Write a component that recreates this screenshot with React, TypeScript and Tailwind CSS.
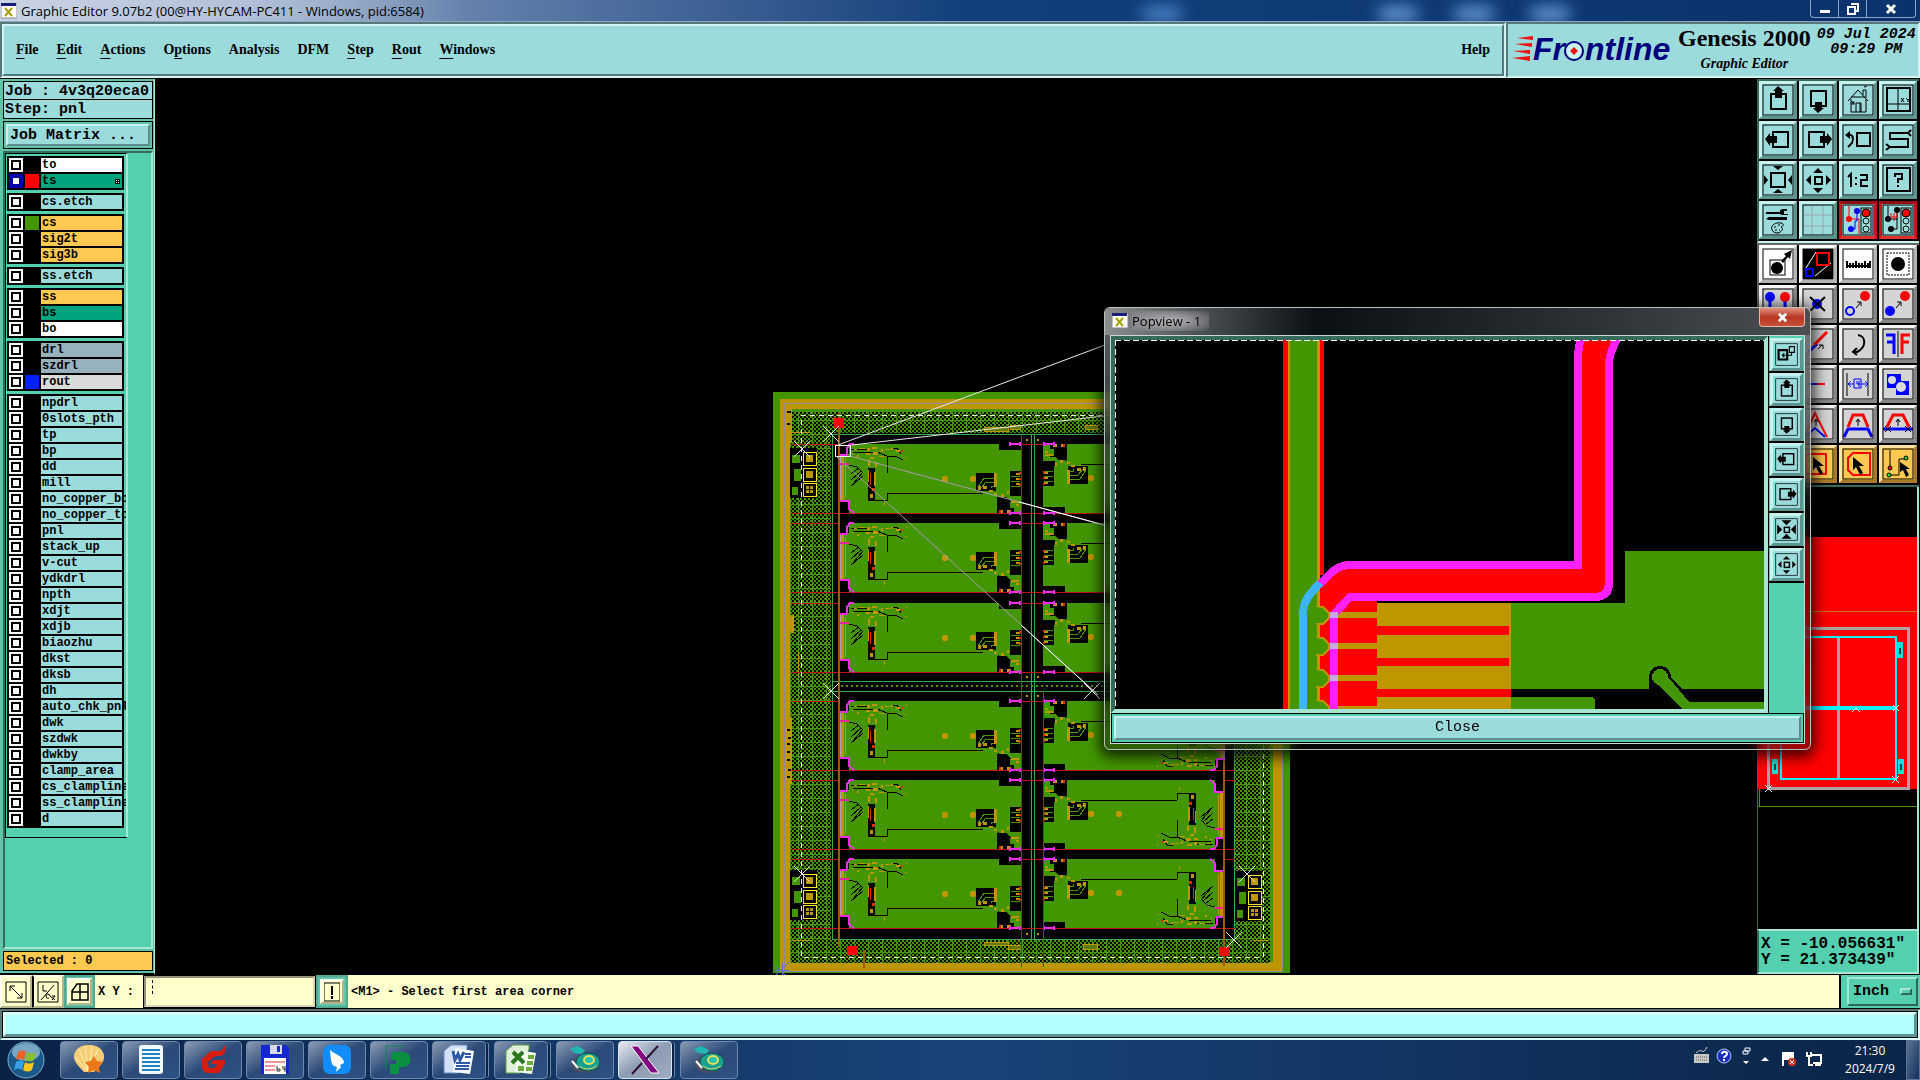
import type { ReactNode } from "react";

type Layer = { name: string; tone: string; swatch?: string; active?: boolean };

const AQUA = "bg-[#9bdbdb]";
const GOLD = "bg-[#ffc850]";
const GREEN = "bg-[#00a57d]";
const STEEL = "bg-[#98b2bd]";

const plain = (names: string): Layer[] =>
  names.split(" ").map((name) => ({ name, tone: AQUA }));

const layerGroups: Layer[][] = [
  [
    { name: "to", tone: "bg-white" },
    { name: "ts", tone: GREEN, swatch: "bg-[#ff0000]", active: true },
  ],
  plain("cs.etch"),
  [
    { name: "cs", tone: GOLD, swatch: "bg-[#439600]" },
    { name: "sig2t", tone: GOLD },
    { name: "sig3b", tone: GOLD },
  ],
  plain("ss.etch"),
  [
    { name: "ss", tone: GOLD },
    { name: "bs", tone: GREEN },
    { name: "bo", tone: "bg-white" },
  ],
  [
    { name: "drl", tone: STEEL },
    { name: "szdrl", tone: STEEL },
    { name: "rout", tone: "bg-[#dadada]", swatch: "bg-[#0020ff]" },
  ],
  plain(
    "npdrl 0slots_pth tp bp dd mill no_copper_bo no_copper_to pnl stack_up v-cut ydkdrl npth xdjt xdjb biaozhu dkst dksb dh auto_chk_pnl dwk szdwk dwkby clamp_area cs_clampline ss_clampline d"
  ),
];

const menus: [string, number][] = [
  ["File", 0],
  ["Edit", 0],
  ["Actions", 0],
  ["Options", 1],
  ["Analysis", -1],
  ["DFM", -1],
  ["Step", 0],
  ["Rout", 0],
  ["Windows", 0],
];

/* ---------- toolbar glyphs, all on a 30x30 grid ---------- */

const box = (x: number, y: number, s: number, w = 2) => (
  <rect x={x} y={y} width={s} height={s} fill="none" stroke="#000" strokeWidth={w} />
);

const lights = (
  <>
    <rect x="18" y="3" width="10" height="25" fill="#9bdbdb" stroke="#000" />
    <circle cx="23" cy="8" r="4" fill="#f00" stroke="#000" />
    <circle cx="23" cy="16" r="3" fill="none" stroke="#000" />
    <circle cx="23" cy="24" r="3" fill="none" stroke="#000" />
  </>
);

const cursor = <path d="M10 8v13l3-3 4 8 3-2-4-7h5z" fill="#000" />;

const glyphs: Record<string, ReactNode> = {
  up: (
    <>
      {box(8, 9, 15)}
      <path d="M15 1l6 5h-2v7h-7V6H10z" />
    </>
  ),
  down: (
    <>
      {box(8, 6, 15)}
      <path d="M15 28l6-5h-2v-6h-7v6h-2z" />
    </>
  ),
  left: (
    <>
      {box(10, 7, 15)}
      <path d="M2 14l5-6v3h7v7H7v3z" />
    </>
  ),
  right: (
    <>
      {box(6, 7, 15)}
      <path d="M29 14l-5-6v3h-7v7h7v3z" />
    </>
  ),
  home: (
    <g fill="none" stroke="#000">
      <path d="M5 16L15 5l10 11M8 14v13h15V14M20 10V5h3v8M13 27v-9h5v9M17 18v9M8 12h14M21 2l3-1" />
      <rect x="9" y="17" width="2" height="2" />
    </g>
  ),
  xy: (
    <>
      {box(4, 3, 23)}
      <path d="M15 3v23M4 19h23" stroke="#000" fill="none" />
      <path d="M18 13l3 4M21 13l-3 4M23 13l2 2 2-2M25 15v2" stroke="#000" fill="none" />
    </>
  ),
  back: (
    <>
      {box(14, 8, 13)}
      <path d="M5 10c5-1 6 3 4 8l-4 4" fill="none" stroke="#000" strokeWidth="2" />
      <path d="M2 10l5-4v8z" />
    </>
  ),
  snake: (
    <path d="M25 8H7v6h18v8H7M25 8l3-3M25 8l3 3M7 22l-4-3M7 22l-4 3" fill="none" stroke="#000" strokeWidth="2" />
  ),
  zoomOut: (
    <>
      {box(8, 8, 14)}
      <path d="M10 1h10l-5 4zM10 28h10l-5-4zM1 10v10l4-5zM29 10v10l-4-5z" />
    </>
  ),
  zoomIn: (
    <>
      {box(12, 12, 7)}
      <path d="M10 8h10l-5-5zM10 23h10l-5 5zM8 10v10l-5-5zM23 10v10l5-5z" />
    </>
  ),
  shrink: (
    <>
      {box(12, 12, 7)}
      <path d="M8 2h14l-7 7zM8 28h14l-7-7zM2 8v14l7-7zM28 8v14l-7-7z" />
    </>
  ),
  ratio: (
    <path d="M5 12l3-3v13M13 12v2M13 18v2M17 10h7v5h-6v6h7" fill="none" stroke="#000" strokeWidth="2" />
  ),
  help: (
    <>
      {box(4, 3, 23)}
      <path d="M12 12V9h7v5h-4v4M15 20v2" fill="none" stroke="#000" strokeWidth="2" />
    </>
  ),
  tools: (
    <>
      <path d="M3 7h14v-2l3-1h4v2h-3v3h4v1h-6l-2-1H3zM3 14l3-2h18v3H6z" />
      <path d="M9 25c-2-5 4-8 9-7 4 1 2 3 0 4 3 1 1 5-3 6-3 0-5-1-6-3z" fill="none" stroke="#000" />
      <path d="M11 22h2M15 20h2M12 25h2M16 25h1" stroke="#000" />
    </>
  ),
  grid: <path d="M9 0v30M20 0v30M0 10h30M0 21h30" stroke="#9aa8a8" fill="none" />,
  routeOn: (
    <>
      <path d="M6 1v13h10v15" stroke="#f00" fill="none" />
      <path d="M14 6v10h-2v8H8" stroke="#00f" fill="none" />
      <circle cx="6" cy="14" r="3" fill="#f00" />
      <circle cx="14" cy="6" r="3" fill="#00f" />
      <circle cx="8" cy="24" r="3" fill="#00f" />
      {lights}
    </>
  ),
  routeErr: (
    <>
      <path d="M5 1v13h10M14 4v20H8" stroke="#000" fill="none" />
      <path d="M8 8v4h7M11 8v8M14 8v4" stroke="#f00" fill="none" />
      <circle cx="5" cy="14" r="3" />
      <circle cx="14" cy="5" r="3" />
      <circle cx="8" cy="24" r="3" />
      {lights}
    </>
  ),
  pick: (
    <>
      {box(7, 11, 15, 1)}
      <circle cx="14" cy="19" r="6" />
      <path d="M18 12l5-5-2-2 8-4-2 9-2-2-5 6z" />
    </>
  ),
  popview: (
    <>
      <rect width="30" height="30" />
      <path d="M3 19L13 3M12 27l16-13" stroke="#fff" />
      <rect x="3" y="20" width="7" height="7" fill="none" stroke="#00f" strokeWidth="2" />
      <rect x="14" y="4" width="12" height="12" fill="none" stroke="#f00" strokeWidth="2" />
    </>
  ),
  ruler: (
    <path d="M3 17h25M4 12v7M7 14v5M10 14v5M13 12v7M16 14v5M19 14v5M22 12v7M25 14v5M27 12v7" stroke="#000" strokeWidth="2" />
  ),
  area: (
    <>
      <rect x="4" y="4" width="22" height="22" fill="none" stroke="#000" strokeDasharray="2 1" />
      <circle cx="15" cy="15" r="7" />
    </>
  ),
  pins: (
    <>
      <path d="M7 8v20M22 8v20" stroke="#00f" strokeWidth="3" />
      <circle cx="7" cy="8" r="5" fill="#00f" />
      <circle cx="22" cy="8" r="5" fill="#f00" />
    </>
  ),
  erase: (
    <>
      <circle cx="14" cy="15" r="5" fill="#00f" />
      <path d="M7 8l15 14M22 8L7 22" stroke="#000" strokeWidth="2" />
    </>
  ),
  copyTo: (
    <>
      <circle cx="7" cy="22" r="4" fill="none" stroke="#00f" strokeWidth="2" />
      <circle cx="22" cy="7" r="5" fill="#f00" />
      <path d="M13 19l5-6M14 13h4v4" stroke="#000" fill="none" />
    </>
  ),
  moveTo: (
    <>
      <circle cx="7" cy="22" r="5" fill="#00f" />
      <circle cx="22" cy="7" r="5" fill="#f00" />
      <path d="M13 19l5-6M14 13h4v4" stroke="#000" fill="none" />
    </>
  ),
  stretch: (
    <>
      <path d="M2 26l12-11" stroke="#00f" strokeWidth="3" />
      <path d="M11 16L24 3" stroke="#f00" strokeWidth="3" />
      <path d="M15 20l4-4M16 16h4v4" stroke="#000" fill="none" />
    </>
  ),
  rotate: (
    <path d="M15 6c8 1 9 12-1 17h-4M14 19l-4 4 4 3" stroke="#000" fill="none" strokeWidth="2" />
  ),
  mirror: (
    <>
      <path d="M3 6h8v19M4 13h7" stroke="#00f" strokeWidth="3" fill="none" />
      <path d="M27 6h-8v19M26 13h-7" stroke="#f00" strokeWidth="3" fill="none" />
      <path d="M15 2v26" stroke="#000" />
    </>
  ),
  segment: (
    <>
      <path d="M2 15h12" stroke="#00f" strokeWidth="2" />
      <path d="M14 15h8" stroke="#f00" strokeWidth="2" />
    </>
  ),
  space: (
    <>
      <path d="M4 4v23M25 4v23" stroke="#000" />
      <path d="M5 15h6M18 15h7M8 12l-3 3 3 3M22 12l3 3-3 3M11 10h7v9h-7zM14 12v3h3M16 12v6" stroke="#00f" fill="none" />
    </>
  ),
  overlap: (
    <>
      <path d="M4 5h14v7h8v14H13v-7H4z" fill="#00f" />
      <circle cx="9" cy="11" r="4" fill="#dadada" />
      <circle cx="18" cy="18" r="5" fill="#dadada" />
    </>
  ),
  peak: (
    <>
      <path d="M1 28L12 4l12 24" stroke="#f00" strokeWidth="2" fill="none" />
      <path d="M2 28l10-9 10 9" stroke="#00f" strokeWidth="2" fill="none" />
      <path d="M13 17v-6M11 13l2-3 2 3" stroke="#000" fill="none" />
    </>
  ),
  trapezoid: (
    <>
      <path d="M1 28l4-8h20l4 8" stroke="#00f" strokeWidth="3" fill="none" />
      <path d="M5 18l5-12h10l5 12" stroke="#f00" strokeWidth="3" fill="none" />
      <path d="M15 17v-6M13 13l2-3 2 3" stroke="#000" fill="none" />
    </>
  ),
  trapezoidCut: (
    <>
      <path d="M0 20h30" stroke="#00f" strokeWidth="3" fill="none" />
      <path d="M4 18l6-12h10l6 12" stroke="#f00" strokeWidth="3" fill="none" />
      <path d="M15 17v-6M13 13l2-3 2 3M2 17l6 6M8 17l-6 6M22 17l6 6M28 17l-6 6" stroke="#000" fill="none" />
    </>
  ),
  selRect: (
    <>
      <rect x="3" y="5" width="20" height="20" fill="none" stroke="#f00" strokeWidth="2" />
      {cursor}
    </>
  ),
  selPoly: (
    <>
      <path d="M10 4h17v22H10l-5-5V9z" fill="none" stroke="#f00" strokeWidth="2" />
      {cursor}
    </>
  ),
  selNet: (
    <>
      <path d="M7 1v17M7 26h9V10h6" fill="none" stroke="#000" />
      <circle cx="7" cy="19" r="2" fill="#f00" stroke="#000" />
      <circle cx="6" cy="26" r="2" fill="#3d3" stroke="#000" />
      <circle cx="23" cy="9" r="2" fill="#3d3" stroke="#000" />
      <path d="M17 13v10l3-2 3 7 3-2-3-6h4z" />
    </>
  ),
  popOut: (
    <g fill="none" stroke="#000">
      <path d="M4 9h12v13H4z" strokeWidth="3" />
      <path d="M19 4h7v8h-7zM22 12v4H9M12 13l-3 3 3 3" strokeWidth="1.5" />
    </g>
  ),
};

const viewTools = [
  "up", "down", "home", "xy",
  "left", "right", "back", "snake",
  "zoomOut", "zoomIn", "ratio", "help",
  "tools", "grid", "routeOn", "routeErr",
];

const editTools = [
  "pick", "popview", "ruler", "area",
  "pins", "erase", "copyTo", "moveTo",
  "stretch", "stretch", "rotate", "mirror",
  "segment", "segment", "space", "overlap",
  "peak", "peak", "trapezoid", "trapezoidCut",
  "selRect", "selRect", "selPoly", "selNet",
];

const popTools = ["popOut", "up", "down", "left", "right", "shrink", "zoomIn"];

function Glyph({ name, className = "size-8" }: { name: string; className?: string }) {
  return (
    <svg viewBox="-1 -1 32 32" className={className}>
      {glyphs[name]}
      <rect x="0" y="0" width="30" height="30" fill="none" stroke="#000" />
    </svg>
  );
}

function toolTone(name: string, i: number, edit: boolean) {
  if (name.startsWith("route")) return `${AQUA} border-[#c4161c] border-t-[#8f1014] border-b-[#e03030]`;
  if (!edit) return `${AQUA} border-t-[#c6f2f0] border-l-[#c6f2f0] border-r-[#5c9490] border-b-[#5c9490]`;
  if (i < 4) return "bg-white border-t-white border-l-white border-r-[#b4b4b4] border-b-[#b4b4b4]";
  if (i > 19) return `${GOLD} border-t-[#ffe6a8] border-l-[#ffe6a8] border-r-[#a87c28] border-b-[#a87c28]`;
  return "bg-[#d4d4d4] border-t-[#f4f4f4] border-l-[#f4f4f4] border-r-[#868686] border-b-[#868686]";
}

function ToolGrid({ tools, edit = false }: { tools: string[]; edit?: boolean }) {
  return (
    <div className="grid grid-cols-[repeat(4,38px)] gap-[2px] bg-black">
      {tools.map((name, i) => (
        <button
          key={i}
          aria-label={name}
          className={`flex h-[38px] items-center justify-center border-3 ${toolTone(name, i, edit)}`}
        >
          <Glyph name={name} />
        </button>
      ))}
    </div>
  );
}

/* ---------- window chrome ---------- */

function XMark() {
  return (
    <svg viewBox="0 0 16 16" className="size-4 shrink-0">
      <rect x="0" y="0" width="16" height="15" fill="#fff" stroke="#888" />
      <rect x="0" y="0" width="15" height="3" fill="#1b1b7a" />
      <path d="M4 5l7 8M11 5l-7 8" stroke="#a6a000" strokeWidth="2" />
    </svg>
  );
}

function TitleBar() {
  return (
    <header className="flex h-[22px] items-start overflow-hidden border-b border-[#8fa5c0] bg-linear-to-r from-[#b4c2d8] via-[#12407c] to-[#0a326c]">
      <div className="flex h-[21px] items-center gap-1 bg-linear-to-r from-[#c8d2e4] via-[#b4c2da] to-[#b4c2da]/0 pr-10 pl-[1px]">
        <XMark />
        <h1 className="font-['Open_Sans',sans-serif] text-[13px] leading-5 whitespace-nowrap text-black">
          Graphic Editor 9.07b2 (00@HY-HYCAM-PC411 - Windows, pid:6584)
        </h1>
      </div>
      {/* blurred desktop icons showing through the glass */}
      <div className="flex flex-1 items-center justify-end gap-9 pt-2 pr-60">
        <span className="mr-40 h-3 w-10 rounded-full bg-[#5c94dc] blur-sm" />
        <span className="h-3 w-10 rounded-full bg-[#7cb0f0] blur-sm" />
        <span className="h-3 w-10 rounded-full bg-[#7cb0f0] blur-sm" />
        <span className="h-3 w-10 rounded-full bg-[#7cb0f0] blur-sm" />
      </div>
      <div className="mr-1 flex h-[18px] divide-x divide-[#8fa5c0] rounded-b border border-t-0 border-[#8fa5c0]">
        <button aria-label="Minimize" className="flex w-7 items-center justify-center">
          <svg viewBox="0 0 12 12" className="size-3"><path d="M1 7h10v3H1z" fill="#fff" /></svg>
        </button>
        <button aria-label="Restore" className="flex w-7 items-center justify-center">
          <svg viewBox="0 0 12 12" className="size-3">
            <path d="M4 1h7v7H9M1 4h7v7H1z" fill="none" stroke="#fff" strokeWidth="2" />
          </svg>
        </button>
        <button aria-label="Close window" className="flex w-12 items-center justify-center">
          <svg viewBox="0 0 12 12" className="size-3">
            <path d="M2 2l8 8M10 2l-8 8" stroke="#fff" strokeWidth="3" />
          </svg>
        </button>
      </div>
    </header>
  );
}

function Logo() {
  return (
    <svg viewBox="0 -8 162 46" className="h-[46px] w-[162px] shrink-0 overflow-visible">
      <path d="M5 3l16-2v4zM3 9l17-1v4zM1 16l17-1v4zM0 23l18-2v5z" fill="#f01010" />
      <g fill="#00007c" fontFamily="Liberation Sans, sans-serif" fontWeight="bold" fontStyle="italic" fontSize="32">
        <text x="21" y="25">Fr</text>
        <text x="73" y="25">ntline</text>
      </g>
      <circle cx="62" cy="16" r="9" fill="#c8f4f4" stroke="#00007c" strokeWidth="2" />
      <path d="M62 12l4 4-4 4-4-4z" fill="#f01010" />
    </svg>
  );
}

function MenuBar() {
  return (
    <div className="flex h-[57px] border-b border-black">
      <nav className={`flex flex-1 items-center justify-between border-2 border-t-[#55787a] border-l-[#55787a] border-r-[#d2f4f4] border-b-[#d2f4f4] ${AQUA}`}>
        <div className="flex h-full flex-1 items-center border-2 border-t-[#d2f4f4] border-l-[#d2f4f4] border-r-[#55787a] border-b-[#55787a] px-3 font-['Liberation_Serif',serif] text-sm font-bold">
          <div className="flex flex-1 gap-[18px]">
            {menus.map(([label, key]) => (
              <button key={label}>
                {key < 0 ? label : (
                  <>
                    {label.slice(0, key)}
                    <span className="underline underline-offset-4">{label[key]}</span>
                    {label.slice(key + 1)}
                  </>
                )}
              </button>
            ))}
          </div>
          <button>Help</button>
        </div>
      </nav>
      <div className={`flex w-[414px] gap-1 border-2 border-t-[#55787a] border-l-[#55787a] border-r-[#d2f4f4] border-b-[#d2f4f4] pl-1 ${AQUA}`}>
        <div className="flex items-center"><Logo /></div>
        <div className="flex flex-col items-center font-['Liberation_Serif',serif] font-bold whitespace-nowrap">
          <span className="text-2xl leading-7">Genesis 2000</span>
          <span className="text-sm leading-6 italic">Graphic Editor</span>
        </div>
        <div className="flex flex-1 flex-col items-center pt-[3px] font-['Liberation_Mono',monospace] text-[15px] leading-[15px] font-bold whitespace-nowrap italic">
          <span>09 Jul 2024</span>
          <span>09:29 PM</span>
        </div>
      </div>
    </div>
  );
}

/* ---------- left column ---------- */

function LayerRow({ layer }: { layer: Layer }) {
  const id = `layer-${layer.name}`;
  return (
    <li className="flex h-[14px] gap-[2px]">
      <input
        id={id}
        type="checkbox"
        className={`size-[14px] shrink-0 appearance-none border-2 bg-white outline-2 -outline-offset-4 ${
          layer.active ? "border-[#0000b4] outline-[#0000a0]" : "border-white outline-black"
        }`}
      />
      <span className={`w-[14px] shrink-0 ${layer.swatch ?? "bg-black"}`} />
      <label
        htmlFor={id}
        className={`flex w-[81px] items-center justify-between pl-[1px] text-xs leading-[14px] font-bold whitespace-nowrap ${layer.tone}`}
      >
        {layer.name}
        {layer.active && (
          <svg viewBox="0 0 5 5" className="mr-[2px] size-[5px]">
            <path d="M0 0h5v5H0z" />
            <path d="M1 1h1v1H1zM3 1h1v1H3zM1 3h1v1H1zM3 3h1v1H3z" fill="#fff" />
          </svg>
        )}
      </label>
    </li>
  );
}

function JobPanel() {
  return (
    <aside className="flex w-[155px] shrink-0 flex-col gap-[2px] border-r border-b-2 border-r-[#a6e6d4] border-b-black bg-[#60c4a8] p-[2px] pr-[1px] pl-[3px] font-['Liberation_Mono',monospace] text-black">
      <div className={`divide-y divide-black border border-black text-[15px] font-bold ${AQUA}`}>
        <p className="h-[18px] pl-[1px] leading-5 whitespace-nowrap">Job : 4v3q20eca0</p>
        <p className="h-[18px] pl-[1px] leading-5">Step: pnl</p>
      </div>
      <div className="border border-black p-[2px]">
        <button className={`block h-[22px] w-full border-2 border-t-[#c6f2f0] border-l-[#c6f2f0] border-r-[#5c8c8c] border-b-[#5c8c8c] pl-[2px] text-left text-[15px] leading-5 font-bold ${AQUA}`}>
          Job Matrix ...
        </button>
      </div>
      <div className="flex-1 border-2 border-t-[#35695a] border-l-[#35695a] border-r-[#a6e6d4] border-b-[#a6e6d4] bg-[#54cfb0]">
        <ul className="flex w-[123px] flex-col gap-[3px] overflow-hidden border border-black border-r-2 border-r-[#a6e6d4] p-[1px] pt-[2px] pb-[9px]">
          {layerGroups.map((group, i) => (
            <li key={i} className="w-[117px] bg-black p-[2px]">
              <ul className="flex flex-col gap-[2px]">
                {group.map((layer) => <LayerRow key={layer.name} layer={layer} />)}
              </ul>
            </li>
          ))}
        </ul>
      </div>
      <p className={`h-5 border border-black pl-[2px] text-xs leading-[18px] font-bold ${GOLD}`}>Selected : 0</p>
    </aside>
  );
}

/* ---------- board drawing ---------- */

const unitRows = [444, 523, 603, 701, 780, 859];

// orange pads scattered over one unit: x, y, w, h
const pads = [
  [15, 5, 3, 1], [20, 4, 6, 1], [28, 4, 3, 3], [33, 3, 5, 2], [27, 9, 4, 2], [34, 8, 5, 3], [42, 5, 2, 3],
  [46, 5, 5, 1], [52, 4, 2, 2], [57, 6, 4, 2], [67, 3, 1, 2], [66, 13, 2, 1], [18, 11, 2, 2], [13, 9, 2, 1],
  [40, 12, 6, 1], [29, 16, 2, 6], [31, 13, 4, 2], [36, 18, 2, 5], [29, 26, 1, 12], [35, 28, 2, 14],
  [31, 50, 3, 4], [45, 58, 1, 4], [6, 14, 1, 40], [155, 29, 3, 14], [139, 42, 3, 4], [144, 42, 4, 3],
  [150, 46, 4, 2], [155, 49, 3, 2], [162, 50, 3, 3], [168, 47, 2, 3], [172, 57, 8, 2], [177, 60, 3, 2],
  [160, 66, 4, 3], [168, 66, 4, 3], [177, 29, 4, 2], [177, 34, 4, 2], [177, 39, 4, 2],
];

function Unit() {
  return (
    <>
      <rect width="182" height="69" fill="#439600" />
      <path d="M0 0h10v10H0zM0 57h10v12H0zM160 0h22v6h-22zM137 29h20v18h-20zM171 27h11v25h-11zM158 53h9l4 4v7h4v5h-17zM29 24h7v32h-7z" fill="#000" />
      <rect y="11" width="2" height="47" fill="#b09ac8" />
      <rect x="2" y="11" width="3" height="47" fill="#be9600" />
      <path
        d="M48 12v17M48 49v7H29M48 49h96M12 5h16M14 8h22M38 8l10 4h8l8 4M52 4h6l4 6M12 42l12-10M14 40l10-12M12 36l10-9M12 30l8-6M10 21l8 2 6 6M159 52l6 5h10M171 52v-4h10"
        fill="none" stroke="#000" strokeWidth="1"
      />
      {pads.map(([x, y, w, h]) => (
        <rect key={`${x}-${y}`} x={x} y={y} width={w} height={h} fill="#be9600" />
      ))}
      <path d="M139 43l6-9h10M142 44l5-6h8M152 44v-2h3M172 32h9M172 37h9M172 42h9" stroke="#439600" fill="none" />
      <circle cx="106" cy="35" r="3" fill="#be9600" />
      <circle cx="134" cy="35" r="3" fill="#be9600" />
      <path d="M62 6h2v2h-2zM31 29h1v12h-1zM33 44h3v3h-3zM180 28h2v2h-2zM180 34h2v2h-2zM180 40h2v2h-2zM160 66h2v3h-2z" fill="#e02a00" />
      <path d="M0 20h10" stroke="#ff20a0" strokeWidth="2" />
      <path
        d="M15 0h-4l-3 4v7H0M0 57h10v8l5 4M170 0h12M170 69h12M171-2v4M181-2v4M171 67v4M181 67v4"
        fill="none" stroke="#f02cf0" strokeWidth="2"
      />
    </>
  );
}

function Fiducials({ x, y }: { x: number; y: number }) {
  return (
    <g transform={`translate(${x} ${y})`}>
      <rect x="-12" y="-3" width="27" height="50" fill="#000" />
      <path d="M-10 4h8v8h-8zM-8 18h7v12h-7zM-10 36h6v8h-6z" fill="#439600" />
      {[0, 16, 31].map((dy) => (
        <g key={dy}>
          <rect x="1" y={dy + 1} width="13" height="13" fill="#000" stroke="#ffe428" />
          <rect x="4" y={dy + 4} width="7" height="7" fill="#be9600" />
        </g>
      ))}
      <path d="M7 34v8M4 38h7" stroke="#000" />
    </g>
  );
}

function Board() {
  const marks = [[831, 434], [802, 449], [831, 691], [1092, 691], [802, 874], [1247, 874], [1234, 940]];
  return (
    <svg viewBox="155 79 1602 896" className="min-w-0 flex-1 bg-black" shapeRendering="crispEdges" role="img" aria-label="Panel view">
      <defs>
        <pattern id="mesh" width="4" height="4" patternUnits="userSpaceOnUse">
          <rect width="4" height="4" fill="#439600" />
          <path d="M0 0h2v2H0zM2 2h2v2H2z" fill="#000" />
        </pattern>
        <pattern id="bars" width="14" height="14" patternUnits="userSpaceOnUse">
          <path d="M0 0h14M0 0v14" stroke="#439600" strokeWidth="2" />
        </pattern>
      </defs>
      <rect x="773" y="392" width="517" height="581" fill="#439600" />
      <rect x="785" y="404" width="493" height="563" fill="none" stroke="#be9600" strokeWidth="10" />
      <rect x="784" y="403" width="498" height="568" fill="none" stroke="#8a8a9c" />
      <rect x="791" y="412" width="479" height="551" fill="url(#mesh)" />
      <rect x="791" y="412" width="479" height="551" fill="url(#bars)" />
      <rect x="831" y="433" width="404" height="507" fill="#000" />
      <rect x="832" y="434" width="402" height="505" fill="none" stroke="#34b048" />
      <path d="M1031 434v505M1034 434v505M832 681h402M832 691h402" stroke="#34b048" />
      <path d="M841 686h386" stroke="#439600" strokeWidth="2" strokeDasharray="2 3" />

      <path d="M787 409h5v34h-5zM787 617h4v-2h3v18h-3zM786 718h6v66h-6z" fill="#be9600" />
      <path d="M787 730h3M788 738h3M787 744h3M787 752h3M787 760h3M788 770h3M787 777h3M787 412h4M787 424h3" stroke="#000" strokeWidth="2" />
      <path d="M792 432h18M798 651v26M792 940h18M1253 940h16" stroke="#be9600" />
      <path d="M984 427h24v4h-24zM1010 425h10v4h-10zM1085 425h12v4h-12zM984 942h24v3h-24zM1008 945h13v4h-13zM1083 944h14v5h-14z" fill="#5c7c10" stroke="#be9600" />

      {unitRows.map((y) => (
        <g key={y}>
          <path d={`M791 ${y}h444M791 ${y + 69}h444`} stroke="#c01010" />
          <g transform={`translate(839 ${y})`}><Unit /></g>
          <g transform={`translate(1225 ${y + 69}) rotate(180)`}><Unit /></g>
        </g>
      ))}
      <path d="M1021 434v533M1043 691v276" stroke="#c01c08" />
      <path d="M839 412v535M1224 760v206M864 950v18" stroke="#a05a00" strokeWidth="2" />
      <path d="M1026 439h2v2h-2zM1037 439h2v2h-2zM1026 676h2v2h-2zM1037 676h2v2h-2zM1026 695h2v2h-2zM1037 695h2v2h-2zM1026 933h2v2h-2zM1037 933h2v2h-2z" fill="#be9600" />

      <Fiducials x={802} y={451} />
      <Fiducials x={802} y={873} />
      <Fiducials x={1247} y={874} />
      <rect x="801" y="415" width="462" height="542" fill="none" stroke="#e8f0e8" strokeDasharray="5 4" />
      <path d="M834 418h10v10h-10zM847 946h10v9h-10zM1219 947h10v9h-10z" fill="#ff0000" />
      <g shapeRendering="auto" stroke="#dce4dc">
        {marks.map(([x, y]) => (
          <path key={`${x}-${y}`} d={`M${x - 8} ${y - 8}l16 16M${x + 8} ${y - 8}l-16 16`} />
        ))}
      </g>
      <path d="M775 965l14 14M789 962l-14 14M775 970h14M782 963v12" stroke="#5c70d8" />
      <rect x="835" y="445" width="15" height="11" fill="none" stroke="#fff" />
      <g strokeWidth="1" shapeRendering="auto">
        <path d="M838 445L1105 345M852 445l252-29" stroke="#e8e8e8" />
        <path d="M850 456l254 69M836 456l262 239" stroke="#a89ca8" />
        <path d="M1019 502l85 23M1021 625l77 70" stroke="#fff" />
      </g>
    </svg>
  );
}

/* ---------- right column ---------- */

function Overview() {
  return (
    <svg viewBox="0 0 161 442" preserveAspectRatio="xMinYMin slice" className="h-[442px] w-full bg-black" shapeRendering="crispEdges" role="img" aria-label="Overview">
      <rect y="50" width="161" height="252" fill="#ff0000" />
      <path d="M0 124h161" stroke="#c87800" />
      <path d="M0 319h161M1 302v17" stroke="#439600" />
      <rect x="10" y="141" width="140" height="160" fill="none" stroke="#a8a4a4" strokeWidth="3" />
      <path d="M80 150v142" stroke="#a8a4a4" strokeWidth="3" />
      <rect x="23" y="150" width="115" height="142" fill="none" stroke="#10f0ff" strokeWidth="2" />
      <path d="M22 221h116" stroke="#10f0ff" strokeWidth="4" />
      <path d="M139 155h6v16h-6zM140 272h6v15h-6zM14 272h6v15h-6z" fill="#20d8e0" />
      <path d="M142 161v6M143 277v6M17 277v6" stroke="#104848" strokeWidth="2" />
      <path d="M7 298l7 7M14 298l-7 7M134 289l7 7M141 289l-7 7M135 218l6 6M141 218l-6 6M94 225l4-4 4 4" stroke="#d8ffff" fill="none" />
    </svg>
  );
}

function ToolPanel() {
  return (
    <aside className="flex w-[163px] shrink-0 flex-col border-r border-b border-black bg-black">
      <div className="border-2 border-r-0 border-t-[#35695a] border-l-[#35695a] border-b-[#c6f2f0] pb-[2px]">
        <ToolGrid tools={viewTools} />
      </div>
      <div className="border-2 border-r-0 border-t-[#666] border-l-[#666] border-b-[#35695a] pb-[2px]">
        <ToolGrid tools={editTools} edit />
      </div>
      <div className="flex flex-1 flex-col border-r-2 border-l border-r-[#a6e6d4] border-l-[#35695a]">
        <Overview />
      </div>
      <div className="border-2 border-t-[#a6e6d4] border-r-[#a6e6d4] border-b-[#a6e6d4] border-l-[#35695a] bg-[#54cfb0] px-[2px] pt-[5px] pb-1 font-['Liberation_Mono',monospace] text-base leading-4 font-bold whitespace-nowrap">
        <p>X = -10.056631"</p>
        <p>Y = 21.373439"</p>
      </div>
    </aside>
  );
}

/* ---------- popview ---------- */

function PopviewDrawing() {
  return (
    <svg viewBox="0 0 649 369" className="min-w-0 flex-1 bg-black" shapeRendering="crispEdges" role="img" aria-label="Zoomed view">
      <path d="M396 263h114v-52h139v138H396zM396 357h81l3 3v9h-84z" fill="#439600" />
      <path d="M168 0h41v235h-4v134h-37z" fill="#ff0000" />
      <path d="M205 369V240l25-19h233V20l3-20h37l-6 22v221l-12 14H262v112z" fill="#ff0000" />
      <path d="M173 0h32v369h-32z" fill="#be9600" />
      <path d="M175 0h27v369h-27z" fill="#439600" />
      <path d="M262 263h134v106H262z" fill="#be9600" />
      <path d="M262 286h132v9H262zM262 318h132v8H262zM262 349h134v8H262z" fill="#ff0000" />
      {[275, 306, 338, 369].map((y) => (
        <g key={y}>
          <path d={`M206 ${y - 3}h57v6h-57z`} fill="#be9600" />
          <path d={`M202 ${y - 8}h6l6 6v5l-6 6h-6z`} fill="#439600" stroke="#be9600" strokeWidth="2" />
          <path d={`M198 ${y - 8}h6v16h-6z`} fill="#439600" />
        </g>
      ))}
      <g fill="none" strokeWidth="8">
        <path d="M219 369V274l16-17h246q13-1 13-14V22q1-10 9-25M467-3q-4 8-4 23V225H236q-12 0-20 8l-13 13" stroke="#ff20ff" />
        <path d="M205 243l-9 10q-8 9-8 22v94" stroke="#3cb4ff" />
      </g>
      {[272, 303, 335].map((y) => (
        <rect key={y} x="215" y={y} width="8" height="6" fill="#c8a8e8" />
      ))}
      <path d="M534 350v-13a11 11 0 0 1 22 0l12 13z" fill="#000" />
      <circle cx="545" cy="337" r="8" fill="#439600" />
      <path d="M540 342l14-4 20 24h75v7h-82z" fill="#439600" />
      <path d="M0 0v369M0 0h649" fill="none" stroke="#fff" strokeWidth="2" strokeDasharray="6 3" />
    </svg>
  );
}

function Popview() {
  return (
    <section className="absolute top-[307px] left-[1104px] w-[707px] rounded-md border border-[#b8c0c0] bg-linear-to-b from-[#6e7274]/90 via-[#0c1012]/60 to-[#101010]/40 px-[5px] pb-[5px] shadow-[0_3px_14px_4px_rgba(0,0,0,0.75)] backdrop-blur-sm">
      <div className="-mx-[5px] flex h-[27px] items-start justify-between rounded-t-md bg-linear-to-r from-[#8c8e90] via-[#0c1014] via-30% to-[#4c5054] pr-[5px] pl-[7px]">
        <div className="flex h-[26px] items-center gap-1">
          <XMark />
          <h2 className="bg-radial from-[#b4b6b8] to-transparent pr-2 font-['Open_Sans',sans-serif] text-[13px] leading-5 text-black">Popview - 1</h2>
        </div>
        <button aria-label="Close popview" className="flex h-[19px] w-[46px] items-center justify-center rounded-b border border-t-0 border-[#e8b8a8] bg-linear-to-b from-[#e09080] via-[#b83420] to-[#c85038]">
          <svg viewBox="0 0 12 12" className="size-[11px]">
            <path d="M2 2l8 8M10 2l-8 8" stroke="#fff" strokeWidth="3" />
          </svg>
        </button>
      </div>
      <div className="border border-[#c8d8d4] bg-[#54cfb0]">
        <div className="flex">
          <div className="flex flex-1 border-4 border-t-[#35695a] border-l-[#35695a] border-r-[#a6e6d4] border-b-[#a6e6d4]">
            <PopviewDrawing />
          </div>
          <div className="flex w-9 flex-col border-l border-black pt-[2px]">
            {popTools.map((name) => (
              <div key={name} className="border-b-2 border-black px-[1px]">
                <button
                  aria-label={`popview ${name}`}
                  className={`flex h-[33px] w-full items-center justify-center border-3 border-t-[#c6f2f0] border-l-[#c6f2f0] border-r-[#5c9490] border-b-[#5c9490] ${AQUA}`}
                >
                  <Glyph name={name} className="size-[23px]" />
                </button>
              </div>
            ))}
          </div>
        </div>
        <div className="border border-black p-[2px]">
          <button className={`block h-6 w-full border-2 border-t-[#c6f2f0] border-l-[#c6f2f0] border-r-[#5c8c8c] border-b-[#5c8c8c] font-['Liberation_Mono',monospace] text-[15px] leading-5 ${AQUA}`}>
            Close
          </button>
        </div>
      </div>
    </section>
  );
}

/* ---------- bottom ---------- */

const cream = "border-t-[#ffffee] border-l-[#ffffee] border-r-[#b4b48c] border-b-[#b4b48c] bg-[#ffffcb]";

function CommandBar() {
  return (
    <div className="flex h-[34px] items-stretch border-b border-black bg-[#ffffcb] font-['Liberation_Mono',monospace] text-xs font-bold">
      <button aria-label="Snap" className={`flex w-8 items-center justify-center border-2 ${cream}`}>
        <svg viewBox="0 0 22 22" className="size-[22px]" fill="none" stroke="#000">
          <path d="M1 1h20v20H1zM5 5l12 12M5 10V5h5M17 12v5h-5" />
        </svg>
      </button>
      <button aria-label="Angle" className={`flex w-8 items-center justify-center border-2 border-l-black ${cream}`}>
        <svg viewBox="0 0 22 22" className="size-[22px]" fill="none" stroke="#000">
          <path d="M1 1h20v20H1zM4 19L17 4M6 4v6h4M12 17a2 2 0 1 1 1-2l5 4M15 15l3 0M18 15l-3 4" />
        </svg>
      </button>
      <div className="flex w-[31px] border-2 border-[#54a890] bg-[#60c4a8] p-[1px]">
        <button aria-label="Grid" className={`flex flex-1 items-center justify-center border-2 ${cream}`}>
          <svg viewBox="0 0 20 20" className="size-5" fill="none" stroke="#000">
            <path d="M2 9l5-7h11v16H2zM2 10h16M10 2v16" strokeWidth="1.5" />
          </svg>
        </button>
      </div>
      <label htmlFor="xy" className="flex w-12 items-center pl-[3px]">X Y :</label>
      <div className="relative flex w-[173px]">
        <input
          id="xy"
          type="text"
          className="w-full border-3 border-t-[#94947c] border-r-[#d8d8b0] border-b-[#d8d8b0] border-l-[#94947c] bg-[#ffffcb] px-2 outline-1 -outline-offset-1 outline-black"
        />
        <span className="absolute top-[5px] left-[9px] h-[14px] border-l border-dashed border-black" />
      </div>
      <div className="flex w-[32px] border-2 border-[#54a890] bg-[#60c4a8] p-[2px]">
        <button aria-label="Alert" className={`flex flex-1 items-center justify-center border-2 ${cream}`}>
          <svg viewBox="0 0 16 20" className="h-5 w-4">
            <path d="M0 1h16v18H0z" fill="none" stroke="#000" />
            <path d="M8 4v9M8 14v3" stroke="#000" strokeWidth="2" />
          </svg>
        </button>
      </div>
      <p className="flex flex-1 items-center border-r-2 border-black pl-[3px]">&lt;M1&gt; - Select first area corner</p>
      <div className="bg-[#54cfb0] py-[2px] pr-[2px] pl-[6px]">
        <button className="flex h-[29px] w-[71px] items-center justify-between border-2 border-t-[#a6e6d4] border-r-[#2c6858] border-b-[#2c6858] border-l-[#a6e6d4] px-1 text-[15px]">
          Inch
          <span className="h-[7px] w-3 border-2 border-t-[#a6e6d4] border-r-[#2c6858] border-b-[#2c6858] border-l-[#a6e6d4]" />
        </button>
      </div>
    </div>
  );
}

const shuttle = (
  <>
    <ellipse cx="16" cy="20" rx="14" ry="9" fill="#4c5060" />
    <ellipse cx="19" cy="18" rx="12" ry="9" fill="#18a090" stroke="#10504c" />
    <ellipse cx="20" cy="16" rx="5" ry="4" fill="#20c8b0" stroke="#e8e060" strokeWidth="2" />
    <path d="M10 22q8 6 18 0" stroke="#d8d860" fill="none" />
    <path d="M1 5l7-3 8 4-3 4-8-1z" fill="#20b8b0" />
    <path d="M3 17l6 7" stroke="#fff" strokeWidth="2" />
  </>
);

const apps: { name: string; art: ReactNode; active?: boolean; stacked?: boolean }[] = [
  {
    name: "Shell",
    art: (
      <>
        <path d="M1 11C3 3 10 1 16 1s13 2 15 10c1 7-5 12-10 17H11C6 23 0 17 1 11z" fill="#f8cc74" />
        <path d="M15 27L6 5M15 27L12 2M16 27l3-25M16 27l9-22M14 27L2 13" stroke="#fff0b8" fill="none" />
        <path d="M21 12l3 5 6 1-4 5 1 6-6-3-6 3 1-6-4-5 6-1z" fill="#e87818" />
      </>
    ),
  },
  {
    name: "Notes",
    art: (
      <>
        <rect x="4" y="1" width="24" height="29" rx="3" fill="#f0f8ff" />
        <path d="M7 6h18M7 10h18M7 14h18M7 18h18M7 22h18M7 26h18" stroke="#2080c0" strokeWidth="2" />
      </>
    ),
  },
  {
    name: "G",
    art: <path d="M29 1l-5 6H14L5 15v10l4 4h13l6-9V16H16l-2 4h6l-2 4h-6l-1-6 7-6h6l4-3z" fill="#d81c10" />,
  },
  {
    name: "Total Commander",
    art: (
      <>
        <path d="M2 1h25l3 3v26H2z" fill="#1428d0" />
        <rect x="11" y="1" width="12" height="9" fill="#d8dce8" />
        <rect x="18" y="2" width="3" height="6" fill="#1428d0" />
        <rect x="5" y="14" width="22" height="16" fill="#fff" />
        <path d="M6 18h20M6 22h10M6 26h10" stroke="#d03030" />
        <path d="M18 22v5h3v-2h-3M24 22v3h3M26 22v6" stroke="#333" fill="none" />
      </>
    ),
  },
  {
    name: "DingTalk",
    art: (
      <>
        <rect x="2" y="1" width="28" height="29" rx="7" fill="#128cf8" />
        <path d="M9 6c4 4 14 6 14 13l-4 2 1 2-5 5 1-5-3-1c-3-2-3-6-4-16z" fill="#fff" />
      </>
    ),
  },
  {
    name: "P",
    art: (
      <>
        <path d="M3 26V2h18" fill="none" stroke="#0a8c48" strokeWidth="1" />
        <path d="M9 8h11c10 0 10 15 0 15h-4v7H7V20h6v-4H8z" fill="#0a9040" />
      </>
    ),
  },
  {
    name: "Word",
    stacked: true,
    art: (
      <>
        <path d="M1 29V7l7-6h16v4L15 29z" fill="#d4e0f4" stroke="#6888c8" />
        <path d="M12 4l19 3-4 23-17-2z" fill="#fff" />
        <path d="M22 10h6M22 13h6M13 19h14M13 22h13M12 25h14" stroke="#3058a8" strokeWidth="2" />
        <path d="M10 7l2 9 3-6 2 6 4-8" fill="none" stroke="#3058a8" strokeWidth="3" />
      </>
    ),
  },
  {
    name: "Excel",
    stacked: true,
    art: (
      <>
        <path d="M1 29V7l7-6h16v4L15 29z" fill="#e0f0d8" stroke="#60a040" />
        <path d="M14 6l17 3-4 21-17-2z" fill="#f4fff0" />
        <path d="M23 11h6v4h-6zM22 17h6v4h-6zM21 23h6v4h-6zM13 22h6v5h-6z" fill="#6cac3c" />
        <path d="M8 8l11 11M18 8L7 19" stroke="#2c7420" strokeWidth="4" />
      </>
    ),
  },
  { name: "Genesis", art: shuttle },
  {
    name: "Exceed",
    active: true,
    stacked: true,
    art: (
      <>
        <path d="M2 2h7l21 27h-8z" fill="#800080" stroke="#fff" />
        <path d="M29 2L17 15M13 19L3 30" stroke="#301030" strokeWidth="2" />
      </>
    ),
  },
  { name: "Genesis 2", art: shuttle },
];

function Taskbar() {
  return (
    <footer className="flex h-10 items-stretch justify-between bg-linear-to-r from-[#0b2246] via-[#184478] to-[#0b2448] pl-[6px] font-['Open_Sans',sans-serif] text-white">
      <div className="flex items-center gap-1">
        <button aria-label="Start" className="mr-[10px] size-10">
          <svg viewBox="0 0 40 40" className="size-10">
            <circle cx="20" cy="20" r="18" fill="#1c5888" stroke="#78b0d0" />
            <ellipse cx="20" cy="12" rx="14" ry="9" fill="#a4c8dc" opacity="0.7" />
            <path d="M12 12q4-3 8 0l-2 8q-4-3-8 0z" fill="#f06020" />
            <path d="M21 12q4 3 9 0l-2 8q-4 3-9 0z" fill="#88c030" />
            <path d="M10 22q4-3 8 0l-2 8q-4-3-8 0z" fill="#38a0e8" />
            <path d="M19 22q4 3 9 0l-2 8q-4 3-9 0z" fill="#fcc820" />
          </svg>
        </button>
        {apps.map((app) => (
          <button
            key={app.name}
            aria-label={app.name}
            className={`flex h-[38px] items-center justify-center rounded-sm border ${
              app.stacked ? "mr-1 w-[54px] shadow-[3px_0_0_-1px_#0b2246,4px_0_0_-1px_#6c88ac]" : "w-[58px]"
            } ${
              app.active
                ? "border-[#dce4ee] bg-linear-to-br from-[#e8ecf2] via-[#8c9cb4] to-[#a0acc0]"
                : "border-[#6c88ac] bg-linear-to-br from-[#8c9cb4] via-[#2c4a78] to-[#2c5284]"
            }`}
          >
            <svg viewBox="0 0 32 32" className="size-8">{app.art}</svg>
          </button>
        ))}
      </div>
      <div className="flex items-center gap-2">
        <svg viewBox="0 0 130 24" className="mr-[10px] mb-1 h-6 w-[130px]" fill="none">
          <rect x="0" y="8" width="15" height="9" fill="#c8c8c8" />
          <path d="M2 11h11M2 14h11" stroke="#555" strokeDasharray="1 1" />
          <path d="M2 7q4-4 6-2t5-4" stroke="#ccc" />
          <circle cx="30" cy="10" r="7" fill="#1830c0" stroke="#b8c8f0" />
          <path d="M28 8c0-3 5-3 5 0 0 2-3 2-3 4M30 13v2" stroke="#fff" strokeWidth="2" />
          <path d="M51 2h5v3h-5zM49 5h5v3h-5z" stroke="#fff" />
          <path d="M49 15h6l-3 3zM67 15h8l-4-4z" fill="#fff" />
          <path d="M89 6v14" stroke="#fff" strokeWidth="2" />
          <path d="M90 6h10v8H90z" fill="#fff" />
          <circle cx="98" cy="16" r="4" fill="#d83020" />
          <path d="M96 14l4 4M100 14l-4 4" stroke="#fff" />
          <path d="M117 9h10v8h-8M121 19h6M113 6v4h4V6M115 10v9h4" stroke="#fff" strokeWidth="2" />
        </svg>
        <div className="w-14 text-center text-xs leading-[18px] whitespace-nowrap">
          <p>21:30</p>
          <p>2024/7/9</p>
        </div>
        <button aria-label="Show desktop" className="h-full w-[14px] border border-[#5c7494] bg-linear-to-br from-[#5c7494] to-[#14305c]" />
      </div>
    </footer>
  );
}

export default function App() {
  return (
    <div className="relative flex min-h-screen flex-col bg-black text-black">
      <TitleBar />
      <MenuBar />
      <main className="flex flex-1">
        <JobPanel />
        <Board />
        <ToolPanel />
      </main>
      <CommandBar />
      <div className="h-[31px] border-2 border-t-[#55787a] border-r-[#d8ffff] border-b-[#d8ffff] border-l-[#55787a] bg-black p-[1px]">
        <div className="h-full border-3 border-t-[#d8ffff] border-r-[#5c9494] border-b-[#5c9494] border-l-[#d8ffff] bg-[#b2ffff]" />
      </div>
      <Taskbar />
      <Popview />
    </div>
  );
}
